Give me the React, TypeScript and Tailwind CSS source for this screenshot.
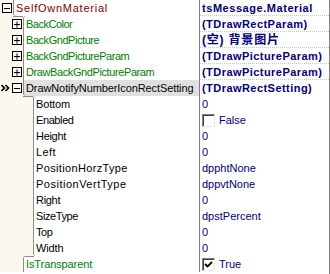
import type { ReactNode } from 'react';

type Row = {
  name: string;
  level: 0 | 1 | 2;
  box?: 'plus' | 'minus';
  tone: 'red' | 'green' | 'black';
  track: string;
  value: ReactNode;
  bold?: boolean;
  selected?: boolean;
  rule?: boolean;
};

const gutterW = ['w-[13px]', 'w-[23px]', 'w-[33px]'];
const toneCls = { red: 'text-[#800000]', green: 'text-[#008000]', black: 'text-black' };

function ExpandBox({ kind }: { kind: 'plus' | 'minus' }) {
  return (
    <svg width="10" height="10" viewBox="0 0 10 10" className="mr-[1px] shrink-0">
      <rect x="0.5" y="0.5" width="9" height="9" fill="none" stroke="#000" />
      <path d="M2 5.5h6" stroke="#000" />
      {kind === 'plus' && <path d="M5 2.5v6" stroke="#000" />}
    </svg>
  );
}

function Marker() {
  return (
    <svg width="9" height="8" viewBox="0 0 9 8" className="mr-[2px] shrink-0">
      <path d="M0.5 1l3 3-3 3M4.5 1l3 3-3 3" fill="none" stroke="#000" strokeWidth="1.7" />
    </svg>
  );
}

function Check({ on }: { on: boolean }) {
  return (
    <span className="flex h-[13px] w-[13px] shrink-0 items-center justify-center border border-t-[#808080] border-l-[#808080] border-b-[#e8e8e8] border-r-[#e8e8e8] bg-white shadow-[inset_1px_1px_0_#404040]">
      {on && (
        <svg width="9" height="9" viewBox="0 0 9 9">
          <path d="M1 4l2.5 2.5L8 2" fill="none" stroke="#000" strokeWidth="1.8" />
        </svg>
      )}
    </span>
  );
}

const rows: Row[] = [
  {
    name: 'SelfOwnMaterial',
    level: 0,
    box: 'minus',
    tone: 'red',
    track: 'tracking-[0.75px]',
    value: <span className="tracking-[0.55px]">tsMessage.Material</span>,
    bold: true,
    rule: true,
  },
  { name: 'BackColor', level: 1, box: 'plus', tone: 'green', track: 'tracking-[-0.5px]', value: '(TDrawRectParam)', bold: true, rule: true },
  {
    name: 'BackGndPicture',
    level: 1,
    box: 'plus',
    tone: 'green',
    track: 'tracking-[-0.45px]',
    value: <span className="text-[12px] tracking-[0.8px]">(空) 背景图片</span>,
    bold: true,
    rule: true,
  },
  { name: 'BackGndPictureParam', level: 1, box: 'plus', tone: 'green', track: 'tracking-[-0.45px]', value: '(TDrawPictureParam)', bold: true, rule: true },
  { name: 'DrawBackGndPictureParam', level: 1, box: 'plus', tone: 'green', track: 'tracking-[-0.4px]', value: '(TDrawPictureParam)', bold: true, rule: true },
  {
    name: 'DrawNotifyNumberIconRectSetting',
    level: 1,
    box: 'minus',
    tone: 'black',
    track: 'tracking-[-0.1px]',
    value: '(TDrawRectSetting)',
    bold: true,
    selected: true,
  },
  { name: 'Bottom', level: 2, tone: 'black', track: 'tracking-[-0.15px]', value: '0' },
  {
    name: 'Enabled',
    level: 2,
    tone: 'black',
    track: 'tracking-[-0.4px]',
    value: (
      <span className="flex items-center gap-[4px]">
        <Check on={false} />
        False
      </span>
    ),
  },
  { name: 'Height', level: 2, tone: 'black', track: 'tracking-[-0.3px]', value: '0' },
  { name: 'Left', level: 2, tone: 'black', track: 'tracking-[0.4px]', value: '0' },
  { name: 'PositionHorzType', level: 2, tone: 'black', track: 'tracking-[0.35px]', value: 'dpphtNone' },
  { name: 'PositionVertType', level: 2, tone: 'black', track: 'tracking-[0.5px]', value: 'dppvtNone' },
  { name: 'Right', level: 2, tone: 'black', track: 'tracking-[-0.3px]', value: '0' },
  { name: 'SizeType', level: 2, tone: 'black', track: 'tracking-[-0.4px]', value: 'dpstPercent' },
  { name: 'Top', level: 2, tone: 'black', track: 'tracking-[-0.4px]', value: '0' },
  { name: 'Width', level: 2, tone: 'black', track: 'tracking-[-0.15px]', value: '0' },
  {
    name: 'IsTransparent',
    level: 1,
    tone: 'green',
    track: 'tracking-[-0.1px]',
    value: (
      <span className="flex items-center gap-[4px]">
        <Check on />
        True
      </span>
    ),
  },
];

export default function App() {
  return (
    <div className="h-[274px] w-[330px] overflow-hidden border-r border-[#808080] bg-white font-['Liberation_Sans','Noto_Sans_CJK_SC',sans-serif] text-[11px] leading-4">
      {rows.map((row, i) => {
        const prev = i > 0 ? rows[i - 1].level : row.level;
        const next = i < rows.length - 1 ? rows[i + 1].level : row.level;
        const stepIn = prev < row.level;
        const stepOut = prev > row.level;
        return (
          <div key={row.name} className="flex h-4">
            <div className="flex w-[200px] shrink-0 border-r border-[#808080] bg-[#fcf8ef]">
              <div
                className={`flex shrink-0 items-center justify-end ${gutterW[row.level]} ${
                  stepIn ? 'bg-[linear-gradient(#8c8c8c,#8c8c8c)] bg-[length:10px_1px] bg-[position:100%_0] bg-no-repeat' : ''
                }`}
              >
                {row.selected && <Marker />}
                {row.box && <ExpandBox kind={row.box} />}
              </div>
              <div
                className={`min-w-0 flex-1 overflow-hidden whitespace-nowrap border-l border-[#8c8c8c] pl-[2px] ${row.track} ${
                  toneCls[row.tone]
                } ${row.selected ? 'bg-[#e0e0e0]' : 'bg-white'} ${stepIn || stepOut ? 'rounded-tl-[3px]' : ''} ${
                  next !== row.level ? 'rounded-bl-[3px]' : ''
                } ${stepOut ? 'bg-[linear-gradient(#8c8c8c,#8c8c8c)] bg-[length:10px_1px] bg-[position:0_0] bg-no-repeat' : ''}`}
              >
                {row.name}
              </div>
            </div>
            <div
              className={`flex min-w-0 flex-1 items-center whitespace-nowrap pl-[2px] text-[#000080] ${
                row.bold ? 'font-bold tracking-[0.45px]' : ''
              } ${row.rule ? 'border-b border-dotted border-[#c8c8c8]' : ''}`}
            >
              {row.value}
            </div>
          </div>
        );
      })}
    </div>
  );
}
